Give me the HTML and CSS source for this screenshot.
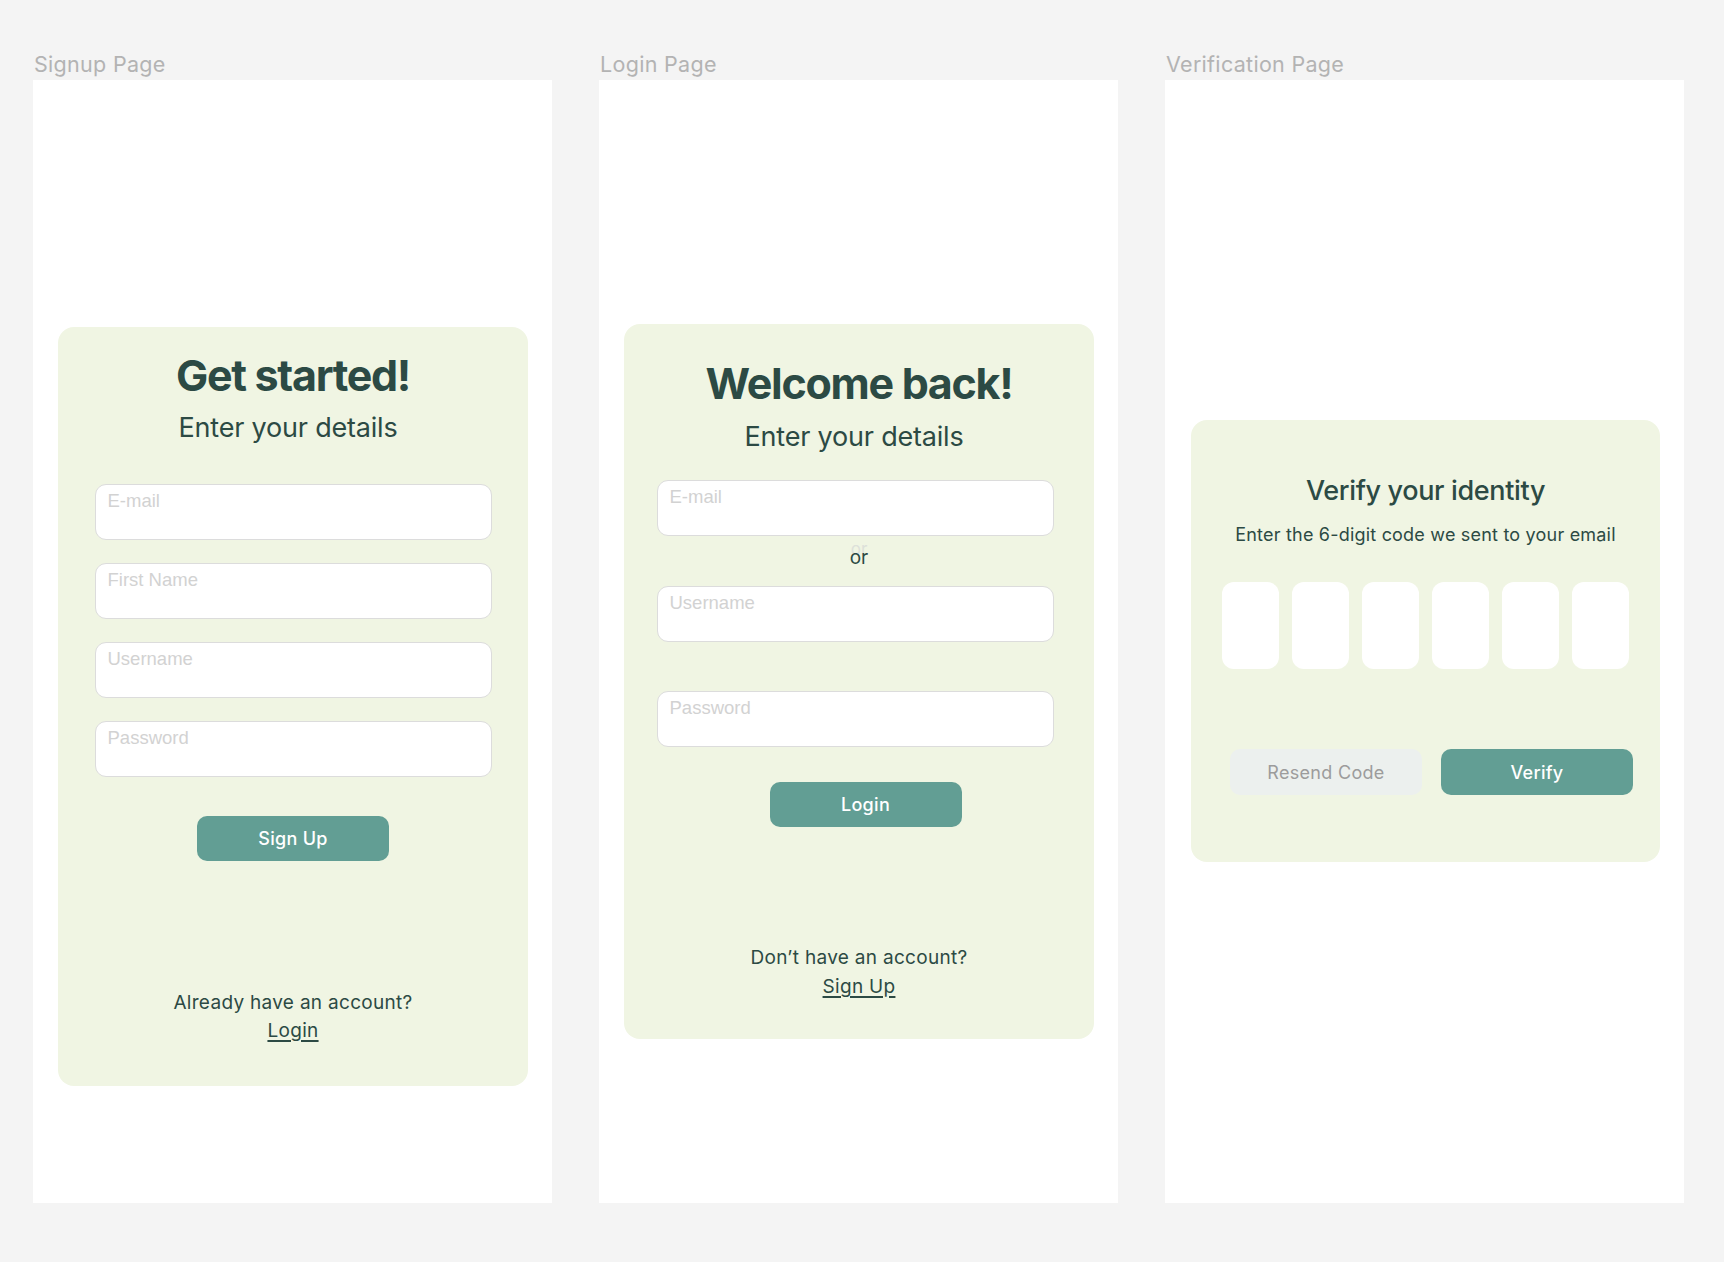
FILE: index.html
```html
<!DOCTYPE html>
<html lang="en">
<head>
<meta charset="utf-8">
<title>Auth Pages</title>
<link rel="stylesheet" href="styles.css">
</head>
<body>
<div class="board">
  <section class="column">
    <div class="label">Signup Page</div>
    <div class="frame frame--signup">
      <div class="card card--signup">
        <h1 class="title">Get started!</h1>
        <h2 class="subtitle">Enter your details</h2>
        <div class="fields">
          <input class="field" type="email" placeholder="E-mail">
          <input class="field" type="text" placeholder="First Name">
          <input class="field" type="text" placeholder="Username">
          <input class="field" type="password" placeholder="Password">
        </div>
        <button class="btn btn--primary btn--signup">Sign Up</button>
        <div class="footer footer--signup">
          <div>Already have an account?</div>
          <a class="link" href="#">Login</a>
        </div>
      </div>
    </div>
  </section>

  <section class="column">
    <div class="label">Login Page</div>
    <div class="frame frame--login">
      <div class="card card--login">
        <h1 class="title">Welcome back!</h1>
        <h2 class="subtitle subtitle--login">Enter your details</h2>
        <input class="field field--login field--email" type="email" placeholder="E-mail">
        <div class="or">or</div>
        <input class="field field--login" type="text" placeholder="Username">
        <input class="field field--login field--password" type="password" placeholder="Password">
        <button class="btn btn--primary btn--login">Login</button>
        <div class="footer footer--login">
          <div>Don’t have an account?</div>
          <a class="link" href="#">Sign Up</a>
        </div>
      </div>
    </div>
  </section>

  <section class="column">
    <div class="label">Verification Page</div>
    <div class="frame frame--verify">
      <div class="card card--verify">
        <h2 class="verify-title">Verify your identity</h2>
        <p class="verify-text">Enter the 6-digit code we sent to your email</p>
        <div class="code-row">
          <input class="code" type="text" maxlength="1">
          <input class="code" type="text" maxlength="1">
          <input class="code" type="text" maxlength="1">
          <input class="code" type="text" maxlength="1">
          <input class="code" type="text" maxlength="1">
          <input class="code" type="text" maxlength="1">
        </div>
        <div class="actions">
          <button class="btn btn--secondary">Resend Code</button>
          <button class="btn btn--primary btn--verify">Verify</button>
        </div>
      </div>
    </div>
  </section>
</div>
</body>
</html>
```

FILE: styles.css
```css
* {
  box-sizing: border-box;
}

html, body {
  margin: 0;
  padding: 0;
}

body {
  background: #f4f4f4;
  font-family: Inter, "Noto Sans", "Liberation Sans", sans-serif;
  color: #2d4a45;
  width: 1724px;
  height: 1262px;
  overflow: hidden;
}

.board {
  display: flex;
  gap: 47px;
  padding: 52px 0 0 33px;
}

.column {
  width: 519px;
  display: flex;
  flex-direction: column;
}

.label {
  font-size: 21.5px;
  line-height: 25px;
  color: #b3b3b3;
  margin-bottom: 3px;
  letter-spacing: 0.3px;
  padding-left: 1px;
}

.frame {
  background: #ffffff;
  height: 1123px;
  display: flex;
  flex-direction: column;
  padding: 0 24px 0 25px;
}

.frame--signup { padding-top: 247px; }
.frame--login { padding-top: 244px; }
.frame--verify { padding-top: 340px; padding-left: 26px; }

.card {
  background: #f0f5e3;
  border-radius: 16px;
  display: flex;
  flex-direction: column;
  align-items: center;
}

.card--signup { padding: 22px 0 41px; }
.card--login { padding: 33px 0 38px; }
.card--verify { padding: 54px 0 67px; }

.title {
  margin: 0;
  font-size: 43px;
  line-height: 52px;
  font-weight: 700;
  letter-spacing: -1.3px;
  color: #2c4a44;
}

.subtitle {
  margin: 10px 0 0;
  padding-right: 10px;
  font-size: 27px;
  line-height: 34px;
  font-weight: 400;
  letter-spacing: -0.2px;
  color: #2c4a44;
}

.subtitle--login { margin-top: 11px; }

.fields {
  margin-top: 39px;
  display: flex;
  flex-direction: column;
  gap: 23px;
}

.field {
  display: block;
  width: 397px;
  height: 56px;
  margin: 0;
  border: 1px solid #dcdcdc;
  border-radius: 11px;
  background: #ffffff;
  padding: 6px 12px 28px;
  font-family: "Liberation Sans", Arial, sans-serif;
  font-size: 18.5px;
  color: #333;
  outline: none;
}

.field::placeholder {
  color: #d2d2d2;
  opacity: 1;
}

.field--login { margin-right: 8px; }
.field--email { margin-top: 26px; }
.field--password { margin-top: 49px; }

.or {
  position: relative;
  z-index: 0;
  margin: 10px 0 17px;
  font-size: 19px;
  line-height: 23px;
  color: #2c4a44;
}

.or::before {
  content: "or";
  position: absolute;
  left: 1px;
  top: -8px;
  font-size: 17px;
  color: #dde1da;
  z-index: -1;
}

.btn {
  border: none;
  font-family: Inter, "Noto Sans", sans-serif;
  font-size: 18px;
  font-weight: 500;
  letter-spacing: 0.3px;
  border-radius: 10px;
  width: 192px;
  height: 45px;
  padding: 0;
  cursor: pointer;
}

.btn--primary {
  background: #629e94;
  color: #ffffff;
}

.btn--secondary {
  background: #ecf0ee;
  color: #9c9c9c;
  font-weight: 400;
}

.btn--signup { margin-top: 39px; }
.btn--login { margin-top: 35px; margin-left: 13px; }

.footer {
  text-align: center;
  font-size: 19px;
  letter-spacing: 0.3px;
  color: #2c4a44;
}

.footer--signup { margin-top: 128px; line-height: 28px; }
.footer--login { margin-top: 116px; line-height: 29px; }

.link {
  color: #2c4a44;
  text-decoration: underline;
  text-decoration-thickness: 1.5px;
  text-underline-offset: 3px;
}

.verify-title {
  margin: 0;
  font-size: 27px;
  line-height: 34px;
  font-weight: 500;
  letter-spacing: -0.35px;
  color: #2c4a44;
}

.verify-text {
  margin: 16px 0 0;
  font-size: 18px;
  line-height: 22px;
  letter-spacing: 0.2px;
  color: #2c4a44;
}

.code-row {
  margin-top: 36px;
  display: flex;
  gap: 13px;
}

.code {
  width: 57px;
  height: 87px;
  border: none;
  border-radius: 12px;
  background: #ffffff;
  margin: 0;
  padding: 0;
  outline: none;
}

.actions {
  margin-top: 80px;
  display: flex;
  gap: 19px;
  padding-left: 12px;
}

.actions .btn {
  height: 46px;
}
```
